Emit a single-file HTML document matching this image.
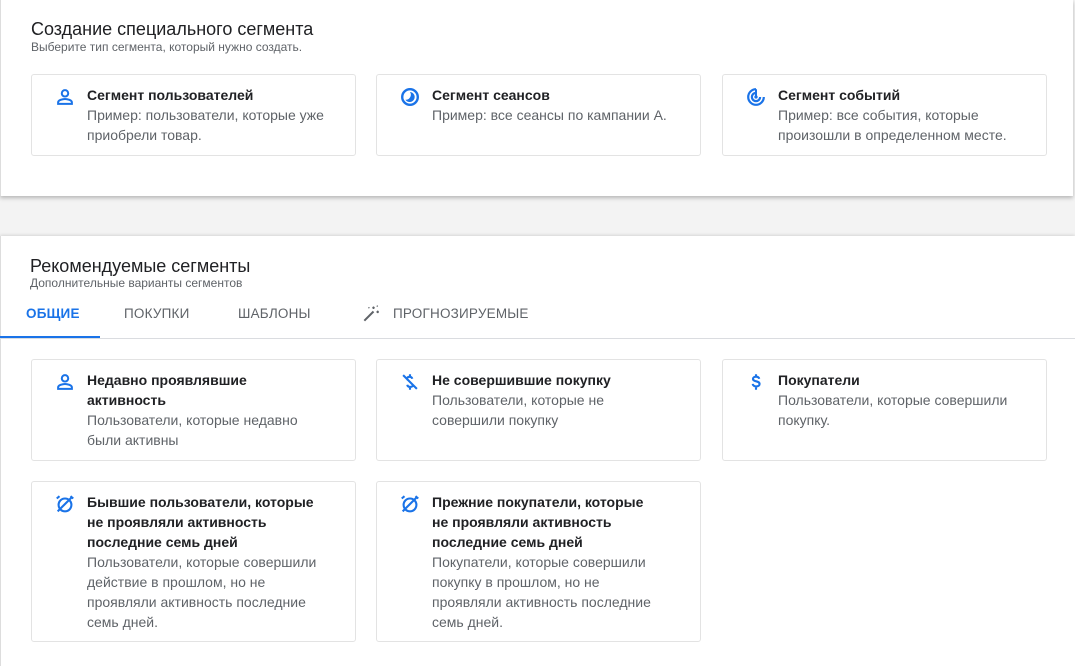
<!DOCTYPE html>
<html><head><meta charset="utf-8"><style>
*{margin:0;padding:0;box-sizing:border-box}
body{width:1075px;height:662px;background:#f3f3f3;font-family:"Liberation Sans",Arial,sans-serif;position:relative;overflow:hidden;color:#202124}
.panel{position:absolute;left:0;background:#fff;border-left:1px solid #ddd}
.p1{top:0;width:1073px;height:196px;box-shadow:0 2px 4px rgba(0,0,0,.25)}
.p2{top:236px;width:1075px;height:430px;box-shadow:0 -1px 3px rgba(0,0,0,.12)}
.h{position:absolute;left:30px;font-size:18px;color:#202124}
.s{position:absolute;left:30px;font-size:12px;color:#5f6368}
.card{position:absolute;background:#fff;border:1px solid #e3e3e3;border-radius:3px;width:325px}
.card svg{position:absolute;left:22px;top:11px;width:22px;height:22px}
.t{position:absolute;left:55px;top:10px;width:265px;font-size:14px;line-height:20px}
.t b{display:block;font-weight:bold;color:#202124}
.t span{display:block;color:#5f6368}
.tabs{position:absolute;top:305px;left:0;width:1075px;height:34px;border-bottom:1px solid #dadce0;font-size:13.5px;color:#5f6368}
.tab{position:absolute;top:1px;letter-spacing:.2px}
</style></head><body>
<div class="panel p1">
<div class="h" style="top:19px">Создание специального сегмента</div>
<div class="s" style="top:40px">Выберите тип сегмента, который нужно создать.</div>
</div>
<div class="panel p2"></div>
<div class="h" style="top:256px">Рекомендуемые сегменты</div>
<div class="s" style="top:276px">Дополнительные варианты сегментов</div>
<div class="tabs">
<div class="tab" style="left:26px;color:#1a73e8;font-weight:bold">ОБЩИЕ</div>
<div class="tab" style="left:124px">ПОКУПКИ</div>
<div class="tab" style="left:238px">ШАБЛОНЫ</div>
<svg style="position:absolute;left:361px;top:-1px" width="20" height="20" viewBox="0 0 24 24"><path d="M4 20L15 9" stroke="#5f6368" stroke-width="2.4"/><path d="M15 3v3M13.5 4.5h3M20 8v3M18.5 9.5h3M19 2l1 1M9 4l1 1" stroke="#5f6368" stroke-width="1.6"/></svg>
<div class="tab" style="left:393px">ПРОГНОЗИРУЕМЫЕ</div>
<div style="position:absolute;left:0;top:31px;width:100px;height:2px;background:#1a73e8"></div>
</div>

<div class="card" style="left:31px;top:74px;height:82px"><svg viewBox="0 0 24 24"><circle cx="12" cy="8" r="3.5" fill="none" stroke="#1a73e8" stroke-width="2.2"/><path d="M4.5 19.5v-1.8c0-2.2 5-3.5 7.5-3.5s7.5 1.3 7.5 3.5v1.8z" fill="none" stroke="#1a73e8" stroke-width="2.2"/></svg><div class="t"><b>Сегмент пользователей</b><span>Пример: пользователи, которые уже<br>приобрели товар.</span></div></div>
<div class="card" style="left:376px;top:74px;height:82px"><svg viewBox="0 0 24 24"><circle cx="12" cy="12" r="8.5" fill="none" stroke="#1a73e8" stroke-width="2.6"/><path d="M12 6.5A5.5 5.5 0 1 1 7 15 5.5 5.5 0 0 0 12 6.5z" fill="#1a73e8"/></svg><div class="t"><b>Сегмент сеансов</b><span>Пример: все сеансы по кампании А.</span></div></div>
<div class="card" style="left:722px;top:74px;height:82px"><svg viewBox="0 0 24 24"><path d="M12 3.5A8.5 8.5 0 1 0 20.5 12" fill="none" stroke="#1a73e8" stroke-width="2.4"/><path d="M12 7.5A4.5 4.5 0 1 0 16.5 12" fill="none" stroke="#1a73e8" stroke-width="2.4"/><circle cx="12" cy="12" r="1.8" fill="#1a73e8"/><path d="M12 12L12 3.5" stroke="#1a73e8" stroke-width="2.2"/></svg><div class="t"><b>Сегмент событий</b><span>Пример: все события, которые<br>произошли в определенном месте.</span></div></div>

<div class="card" style="left:31px;top:359px;height:102px"><svg viewBox="0 0 24 24"><circle cx="12" cy="8" r="3.5" fill="none" stroke="#1a73e8" stroke-width="2.2"/><path d="M4.5 19.5v-1.8c0-2.2 5-3.5 7.5-3.5s7.5 1.3 7.5 3.5v1.8z" fill="none" stroke="#1a73e8" stroke-width="2.2"/></svg><div class="t"><b>Недавно проявлявшие<br>активность</b><span>Пользователи, которые недавно<br>были активны</span></div></div>
<div class="card" style="left:376px;top:359px;height:102px"><svg viewBox="0 0 24 24"><path d="M14.5 8.5c-.3-1.3-1.4-2.2-3-2.2-1.5 0-2.7.8-2.7 2 0 .6.3 1 .8 1.4M9 15c.3 1.5 1.5 2.4 3.2 2.4 1.2 0 2.2-.4 2.7-1.1M12 3.5v2.8M12 17.5v3M4.5 4.5l15 15" fill="none" stroke="#1a73e8" stroke-width="2.3"/></svg><div class="t"><b>Не совершившие покупку</b><span>Пользователи, которые не<br>совершили покупку</span></div></div>
<div class="card" style="left:722px;top:359px;height:102px"><svg viewBox="0 0 24 24"><path d="M15.5 8.5c-.3-1.4-1.6-2.3-3.5-2.3-2 0-3.3 1-3.3 2.4 0 3.5 7.2 1.8 7.2 5.6 0 1.5-1.5 2.6-3.7 2.6-2 0-3.6-1-3.8-2.7M12 3.5v3M12 17v3.5" fill="none" stroke="#1a73e8" stroke-width="2.3"/></svg><div class="t"><b>Покупатели</b><span>Пользователи, которые совершили<br>покупку.</span></div></div>

<div class="card" style="left:31px;top:481px;height:161px"><svg viewBox="0 0 24 24"><circle cx="12" cy="13" r="7" fill="none" stroke="#1a73e8" stroke-width="2.3"/><path d="M3 6l3-2.5M21 6l-3-2.5M4 20L19 5" stroke="#1a73e8" stroke-width="2.3"/></svg><div class="t"><b>Бывшие пользователи, которые<br>не проявляли активность<br>последние семь дней</b><span>Пользователи, которые совершили<br>действие в прошлом, но не<br>проявляли активность последние<br>семь дней.</span></div></div>
<div class="card" style="left:376px;top:481px;height:161px"><svg viewBox="0 0 24 24"><circle cx="12" cy="13" r="7" fill="none" stroke="#1a73e8" stroke-width="2.3"/><path d="M3 6l3-2.5M21 6l-3-2.5M4 20L19 5" stroke="#1a73e8" stroke-width="2.3"/></svg><div class="t"><b>Прежние покупатели, которые<br>не проявляли активность<br>последние семь дней</b><span>Покупатели, которые совершили<br>покупку в прошлом, но не<br>проявляли активность последние<br>семь дней.</span></div></div>
</body></html>
